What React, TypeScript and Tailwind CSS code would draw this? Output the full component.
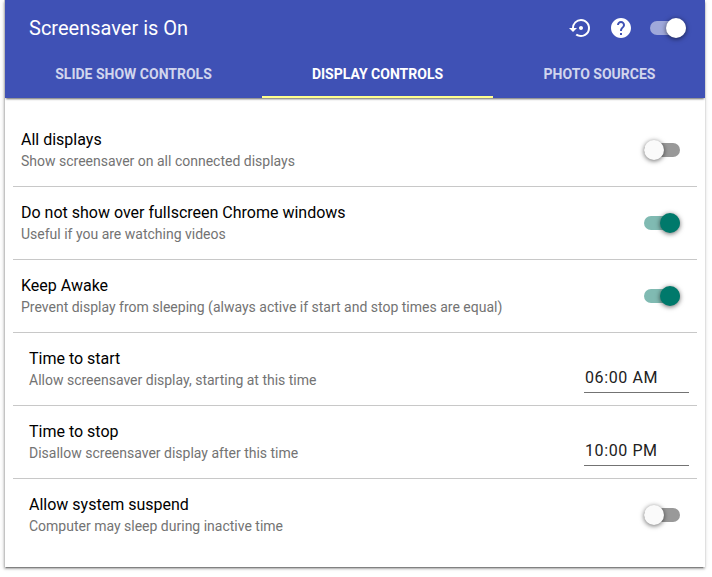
import type { ReactNode } from "react";
import { MdHelp, MdSettingsBackupRestore } from "react-icons/md";

function Toggle({ kind }: { kind: "off" | "on" | "header" }) {
  const track = { off: "bg-[#999999]", on: "bg-[#80bab2]", header: "bg-[#9fa8da]" }[kind];
  const knob = {
    off: "left-0 bg-[#fafafa]",
    on: "right-0 bg-[#00796b]",
    header: "right-0 bg-white",
  }[kind];
  return (
    <div className={`relative h-[14px] w-9 shrink-0 rounded-full ${track}`}>
      <div
        className={`absolute -top-[3px] size-5 rounded-full shadow-[0_1px_5px_0_rgba(0,0,0,0.6)] ${knob}`}
      />
    </div>
  );
}

function Row({
  title,
  detail,
  inset,
  last,
  children,
}: {
  title: string;
  detail: string;
  inset?: boolean;
  last?: boolean;
  children: ReactNode;
}) {
  return (
    <div
      className={`mx-2 flex h-[73px] justify-between pr-[17px] ${inset ? "pl-4" : "pl-2"} ${last ? "" : "border-b border-[#c8c8c8]"}`}
    >
      <div className="pt-[14px]">
        <div className="text-[16px] leading-6 text-black">{title}</div>
        <div className="-mt-px text-[14px] leading-5 text-[#737373]">{detail}</div>
      </div>
      {children}
    </div>
  );
}

function TimeField({ value }: { value: string }) {
  return (
    <div className="-mr-[9px] mt-[33px] h-[27px] w-[105px] border-b border-[#737373] pl-px text-[16px] leading-6 tracking-[0.6px] text-[#212121]">
      {value}
    </div>
  );
}

export default function App() {
  return (
    <div className="h-[577px] w-[712px] overflow-hidden bg-white font-['Roboto',sans-serif]">
      <div className="ml-[4px] h-[567px] w-[701px] border-l border-[#c4c4c4] bg-white shadow-[0_2px_2px_0_rgba(0,0,0,0.24),0_1px_5px_0_rgba(0,0,0,0.12),0_3px_1px_-2px_rgba(0,0,0,0.3)]">
        <header className="h-[98px] bg-[#3f51b5] text-white shadow-[0_2px_2px_-1px_rgba(0,0,0,0.6)]">
          <div className="flex h-[50px] items-start pl-6 pr-[19px] pt-4">
            <h1 className="flex-1 text-[20px] leading-6">Screensaver is On</h1>
            <MdSettingsBackupRestore className="mr-4 size-6" />
            <MdHelp className="mr-[17px] size-6" />
            <div className="pt-[5px]">
              <Toggle kind="header" />
            </div>
          </div>
          <nav className="flex h-12 text-[14px] font-bold leading-[48px]">
            <div className="w-[257px] text-center text-[#d1d5ed]">SLIDE SHOW CONTROLS</div>
            <div className="w-[231px] border-b-2 border-[#ffff8d] text-center">DISPLAY CONTROLS</div>
            <div className="w-[212px] pl-px text-center text-[#d1d5ed]">PHOTO SOURCES</div>
          </nav>
        </header>
        <main className="pt-4">
          <Row title="All displays" detail="Show screensaver on all connected displays">
            <div className="pt-[29px]"><Toggle kind="off" /></div>
          </Row>
          <Row title="Do not show over fullscreen Chrome windows" detail="Useful if you are watching videos">
            <div className="pt-[29px]"><Toggle kind="on" /></div>
          </Row>
          <Row title="Keep Awake" detail="Prevent display from sleeping (always active if start and stop times are equal)">
            <div className="pt-[29px]"><Toggle kind="on" /></div>
          </Row>
          <Row inset title="Time to start" detail="Allow screensaver display, starting at this time">
            <TimeField value="06:00 AM" />
          </Row>
          <Row inset title="Time to stop" detail="Disallow screensaver display after this time">
            <TimeField value="10:00 PM" />
          </Row>
          <Row inset last title="Allow system suspend" detail="Computer may sleep during inactive time">
            <div className="pt-[29px]"><Toggle kind="off" /></div>
          </Row>
        </main>
      </div>
    </div>
  );
}
